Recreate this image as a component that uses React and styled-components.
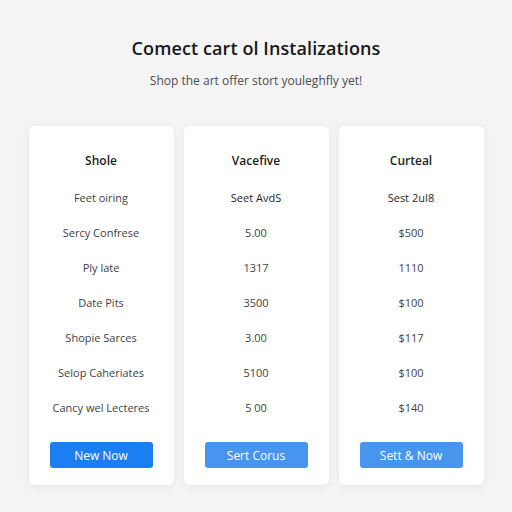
import React from 'react';
import styled, { createGlobalStyle } from 'styled-components';

const GlobalStyle = createGlobalStyle`
  body {
    margin: 0;
    background: #f4f4f5;
    font-family: 'Open Sans', 'Liberation Sans', sans-serif;
  }
`;

const Page = styled.div`
  width: 512px;
  height: 512px;
  padding-top: 36px;
  box-sizing: border-box;
  display: flex;
  flex-direction: column;
  align-items: center;
`;

const Title = styled.h1`
  margin: 0;
  font-size: 18px;
  line-height: 24px;
  font-weight: 600;
  color: #16181d;
  letter-spacing: 0.1px;
`;

const Subtitle = styled.p`
  margin: 13px 0 0;
  font-size: 12px;
  line-height: 16px;
  color: #4a4d55;
`;

const Cards = styled.div`
  margin-top: 37px;
  display: grid;
  grid-template-columns: repeat(3, 145px);
  gap: 10px;
`;

const Card = styled.div`
  background: #fff;
  border-radius: 6px;
  box-shadow: 0 2px 10px rgba(0, 0, 0, 0.06);
  padding: 26px 0 17px;
  display: flex;
  flex-direction: column;
  align-items: center;
`;

const CardTitle = styled.div`
  font-size: 12px;
  line-height: 18px;
  font-weight: 600;
  color: #1c1e24;
  margin-bottom: 10px;
`;

const Row = styled.div`
  height: 35px;
  display: flex;
  align-items: center;
  font-size: 11px;
  color: ${p => (p.$strong ? '#23252b' : '#3e4149')};
  font-weight: ${p => (p.$strong ? 500 : 400)};
`;

const Button = styled.button`
  margin-top: 17px;
  width: 103px;
  height: 26px;
  border: none;
  border-radius: 3px;
  background: ${p => (p.$primary ? '#1c7ef3' : '#4795ef')};
  color: #fff;
  font-family: inherit;
  font-size: 12px;
  font-weight: 500;
`;

const plans = [
  {
    name: 'Shole',
    rows: ['Feet oiring', 'Sercy Confrese', 'Ply late', 'Date Pits', 'Shopie Sarces', 'Selop Caheriates', 'Cancy wel Lecteres'],
    cta: 'New Now',
    primary: true,
  },
  {
    name: 'Vacefive',
    rows: ['Seet AvdS', '5.00', '1317', '3500', '3.00', '5100', '5 00'],
    cta: 'Sert Corus',
    strongFirst: true,
  },
  {
    name: 'Curteal',
    rows: ['Sest 2uI8', '$500', '1110', '$100', '$117', '$100', '$140'],
    cta: 'Sett & Now',
    strongFirst: true,
  },
];

export default function App() {
  return (
    <>
      <GlobalStyle />
      <Page>
        <Title>Comect cart ol Instalizations</Title>
        <Subtitle>Shop the art offer stort youleghfly yet!</Subtitle>
        <Cards>
          {plans.map(plan => (
            <Card key={plan.name}>
              <CardTitle>{plan.name}</CardTitle>
              {plan.rows.map((r, i) => (
                <Row key={i} $strong={plan.strongFirst && i === 0}>{r}</Row>
              ))}
              <Button $primary={plan.primary}>{plan.cta}</Button>
            </Card>
          ))}
        </Cards>
      </Page>
    </>
  );
}
